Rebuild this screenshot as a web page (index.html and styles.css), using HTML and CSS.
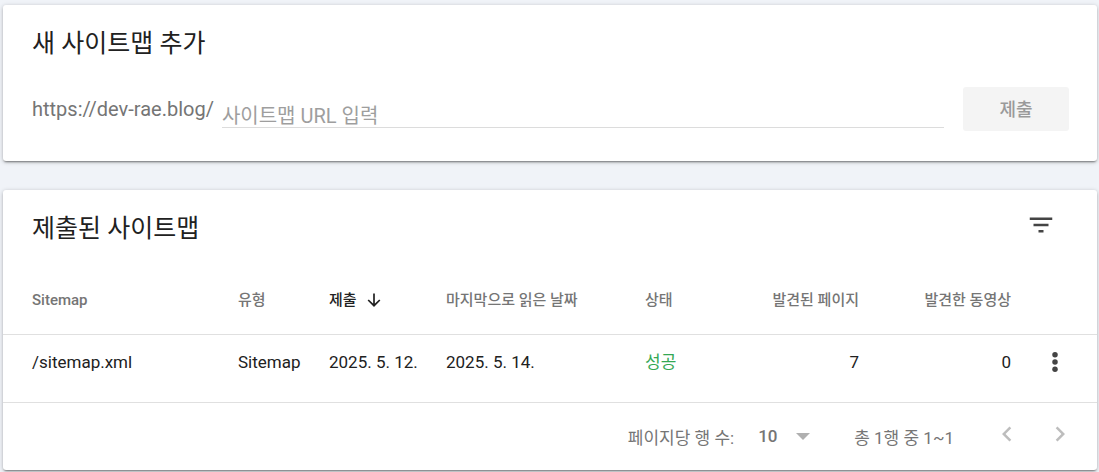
FILE: index.html
```html
<!DOCTYPE html>
<html lang="ko">
<head>
<meta charset="utf-8">
<meta name="viewport" content="width=device-width, initial-scale=1">
<title>Sitemaps</title>
<link rel="stylesheet" href="styles.css">
</head>
<body>
<main class="page">
  <section class="card">
    <h2 class="card-title">새 사이트맵 추가</h2>
    <form class="add-form">
      <label class="url-prefix" for="sitemap-url">https://dev-rae.blog/</label>
      <input class="url-input" id="sitemap-url" type="text" placeholder="사이트맵 URL 입력">
      <button class="submit" type="submit" disabled>제출</button>
    </form>
  </section>

  <section class="card">
    <header class="card-header">
      <h2 class="card-title">제출된 사이트맵</h2>
      <button class="icon-button filter" type="button" aria-label="필터">
        <svg width="30" height="30" viewBox="0 0 24 24" fill="currentColor"><path d="M10 18h4v-2h-4v2zM3 6v2h18V6H3zm3 7h12v-2H6v2z"/></svg>
      </button>
    </header>
    <table class="sitemaps">
      <colgroup>
        <col>
        <col class="col-type">
        <col class="col-submitted">
        <col class="col-read">
        <col class="col-status">
        <col class="col-pages">
        <col class="col-videos">
        <col class="col-menu">
      </colgroup>
      <thead>
        <tr>
          <th>Sitemap</th>
          <th>유형</th>
          <th class="sorted" aria-sort="descending"><span class="sort-label">제출
            <svg width="14" height="14" viewBox="0 0 14 14" fill="none" stroke="currentColor" stroke-width="1.7"><path d="M7 0.5v12M1.2 7L7 12.7 12.8 7"/></svg></span></th>
          <th>마지막으로 읽은 날짜</th>
          <th>상태</th>
          <th class="number">발견된 페이지</th>
          <th class="number">발견한 동영상</th>
          <td></td>
        </tr>
      </thead>
      <tbody>
        <tr>
          <td>/sitemap.xml</td>
          <td>Sitemap</td>
          <td>2025. 5. 12.</td>
          <td>2025. 5. 14.</td>
          <td class="success">성공</td>
          <td class="number">7</td>
          <td class="number">0</td>
          <td class="menu-cell">
            <button class="icon-button" type="button" aria-label="메뉴">
              <svg width="30" height="30" viewBox="0 0 24 24" fill="currentColor"><circle cx="12" cy="6.2" r="2.2"/><circle cx="12" cy="12" r="2.2"/><circle cx="12" cy="17.8" r="2.2"/></svg>
            </button>
          </td>
        </tr>
      </tbody>
    </table>
    <footer class="pager">
      <label for="page-size">페이지당 행 수:</label>
      <span class="select-wrap">
        <select class="page-size" id="page-size"><option>10</option><option>25</option><option>50</option></select>
        <svg class="caret" width="14" height="7" viewBox="0 0 14 7" fill="currentColor"><path d="M0 0h14L7 7z"/></svg>
      </span>
      <span class="range">총 1행 중 1~1</span>
      <button class="icon-button page-button" type="button" aria-label="이전" disabled>
        <svg width="30" height="30" viewBox="0 0 24 24" fill="currentColor"><path d="M15.41 7.41L14 6l-6 6 6 6 1.41-1.41L10.83 12z"/></svg>
      </button>
      <button class="icon-button page-button" type="button" aria-label="다음" disabled>
        <svg width="30" height="30" viewBox="0 0 24 24" fill="currentColor"><path d="M8.59 16.59L10 18l6-6-6-6-1.41 1.41L13.17 12z"/></svg>
      </button>
    </footer>
  </section>
</main>
</body>
</html>
```
FILE: styles.css
```css
* {
  box-sizing: border-box;
}

body {
  margin: 0;
  background: #f0f3f8;
  color: #212121;
  font-family: Roboto, "Noto Sans CJK KR", sans-serif;
  font-size: 17px;
}

button,
input,
select {
  margin: 0;
  font-family: inherit;
}

.page {
  display: flex;
  flex-direction: column;
  gap: 29px;
  padding: 5px 2px 2px 3px;
}

.card {
  background: #fff;
  border-radius: 3px;
  box-shadow: 0 1px 4px rgba(0, 0, 0, 0.26), 0 2px 2px -1px rgba(0, 0, 0, 0.4);
}

.card-title {
  margin: 0;
  padding: 21px 29px 17px;
  font-size: 25px;
  font-weight: 400;
  line-height: 36px;
}

.add-form {
  display: flex;
  align-items: center;
  padding: 8px 28px 30px 29px;
}

.url-prefix {
  color: #757575;
  font-size: 20px;
  line-height: 44px;
}

.url-input {
  flex: 1;
  align-self: flex-start;
  min-width: 0;
  height: 41px;
  margin: 0 19px 0 8px;
  padding: 17px 0 0;
  border: 0;
  border-bottom: 1px solid #dcdcdc;
  background: none;
  font-size: 20px;
  outline: 0;
}

.url-input::placeholder {
  color: #9e9e9e;
}

.submit {
  width: 106px;
  height: 44px;
  padding: 0 0 3px;
  border: 0;
  border-radius: 3px;
  background: #f4f4f4;
  color: #9a9a9a;
  font-size: 18px;
  font-weight: 500;
}

.card-header {
  display: flex;
  align-items: center;
  justify-content: space-between;
}

.icon-button {
  display: inline-flex;
  padding: 0;
  border: 0;
  background: none;
  color: #444;
}

.filter {
  margin: 0 41px 4px 0;
}

.sitemaps {
  width: 100%;
  border-collapse: collapse;
  table-layout: fixed;
}

.col-type { width: 91px; }
.col-submitted { width: 117px; }
.col-read { width: 199px; }
.col-status { width: 75px; }
.col-pages { width: 139px; }
.col-videos { width: 152px; }
.col-menu { width: 86px; }

.sitemaps th,
.sitemaps td {
  height: 68px;
  padding: 15px 0 0;
  border-bottom: 1px solid #e0e0e0;
  line-height: 24px;
  text-align: left;
  vertical-align: top;
  white-space: nowrap;
}

.sitemaps tr > :first-child {
  padding-left: 29px;
}

.sitemaps th {
  height: 70px;
  padding-top: 24px;
  color: #757575;
  font-size: 15px;
  font-weight: 500;
}

.sitemaps th.sorted {
  color: #212121;
}

.sort-label {
  display: inline-flex;
  align-items: center;
  gap: 10px;
}

.sitemaps .number {
  text-align: right;
}

.sitemaps .success {
  color: #34a853;
}

.sitemaps .menu-cell {
  padding-top: 12px;
  padding-left: 29px;
}

.menu-cell .icon-button {
  vertical-align: top;
}

.pager {
  display: flex;
  align-items: center;
  justify-content: flex-end;
  height: 67px;
  padding-right: 22px;
  color: #757575;
  font-size: 17px;
}

.select-wrap {
  display: grid;
  align-items: center;
  margin: 0 44px 0 24px;
}

.page-size {
  grid-area: 1 / 1;
  width: 52px;
  padding: 0;
  border: 0;
  appearance: none;
  background: none;
  color: #757575;
  font-size: 17px;
  font-weight: 500;
}

.caret {
  grid-area: 1 / 1;
  justify-self: end;
  color: #b0b0b0;
  pointer-events: none;
}

.range {
  margin-right: 38px;
}

.page-button {
  margin-bottom: 4px;
  color: #bdbdbd;
}

.page-button + .page-button {
  margin-left: 23px;
}
```
